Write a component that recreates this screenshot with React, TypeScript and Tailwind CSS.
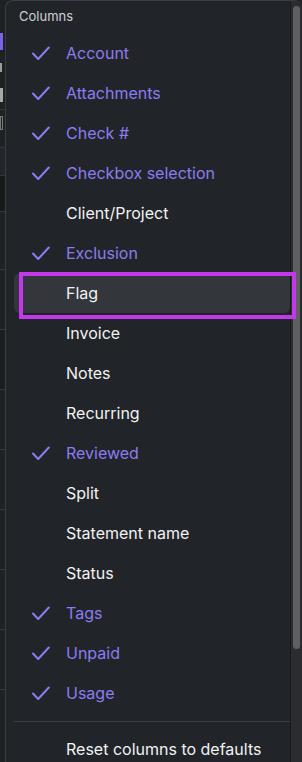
import { useState } from "react";

const columns = [
  { label: "Account", on: true },
  { label: "Attachments", on: true },
  { label: "Check #", on: true },
  { label: "Checkbox selection", on: true },
  { label: "Client/Project", on: false },
  { label: "Exclusion", on: true },
  { label: "Flag", on: false },
  { label: "Invoice", on: false },
  { label: "Notes", on: false },
  { label: "Recurring", on: false },
  { label: "Reviewed", on: true },
  { label: "Split", on: false },
  { label: "Statement name", on: false },
  { label: "Status", on: false },
  { label: "Tags", on: true },
  { label: "Unpaid", on: true },
  { label: "Usage", on: true },
];

const CheckMark = () => (
  <svg width="18" height="15" viewBox="0 0 18 15" fill="none">
    <path
      d="M1 7.5 L6.2 13 L16.8 1.5"
      stroke="#8b7cf2"
      strokeWidth="2"
      strokeLinecap="round"
      strokeLinejoin="round"
    />
  </svg>
);

// the page peeking out left of the menu
const PageEdge = () => (
  <div className="flex w-[5px] flex-col bg-[#1f2225]">
    <div className="h-[33px]" />
    <div className="h-[17px] w-[3px] bg-[#7a62e8]" />
    <div className="h-[13px]" />
    <div className="h-[9px] w-[2px] bg-[#9c9c9c]" />
    <div className="h-[16px]" />
    <div className="h-[14px] w-[3px] bg-[#a8a8a8]" />
    <div className="h-[8px] border-b border-[#34373b]" />
    <div className="h-[6px]" />
    <div className="h-[14px] w-[3px] border border-[#7a7a7a]" />
    <div className="h-[18px] border-b border-[#1f3a5c]" />
    <div className="h-[28px] border-b border-[#1f3a5c] bg-[#232629]" />
    <div className="h-[36px] border-b border-[#34373b] bg-[#17191b]" />
    <div className="h-[58px] border-b border-[#34373b]" />
    <div className="h-[60px] border-b border-[#34373b]" />
    <div className="h-[60px] border-b border-[#34373b] bg-[#1b1d20]" />
    <div className="h-[60px] border-b border-[#34373b]" />
    <div className="h-[60px] border-b border-[#34373b]" />
    <div className="h-[60px] border-b border-[#34373b]" />
    <div className="h-[60px] border-b border-[#34373b]" />
    <div className="h-[60px] border-b border-[#34373b]" />
    <div className="flex-1" />
  </div>
);

export default function App() {
  const [hovered, setHovered] = useState("Flag");

  return (
    <div className="relative flex h-[762px] w-[302px] overflow-hidden bg-[#1f2225] font-['Inter',sans-serif]">
      <PageEdge />

      <div className="flex h-[770px] flex-1 overflow-hidden rounded-lg border-l border-t border-[#3a3d42] bg-[#212428]">
        <div className="flex w-[284px] flex-col">
          <div className="flex h-[32px] items-center pl-[13px] text-[13px] text-[#cfd0d2]">
            Columns
          </div>

          {columns.map((c) => (
            <div
              key={c.label}
              onMouseEnter={() => setHovered(c.label)}
              className={`ml-[8px] flex h-[40px] items-center rounded-md ${
                hovered === c.label ? "bg-[#33363b]" : ""
              }`}
            >
              <div className="flex w-[52px] justify-center pl-[2px]">
                {c.on && <CheckMark />}
              </div>
              <span
                className={`text-[16px] ${
                  c.on ? "text-[#8b7cf2]" : "text-[#f2f2f3]"
                }`}
              >
                {c.label}
              </span>
            </div>
          ))}

          <div className="ml-[8px] mt-[8px] border-t border-[#3a3d42]" />

          <div className="ml-[8px] flex h-[40px] items-center pl-[52px] pt-[14px] text-[16px] text-[#f2f2f3]">
            Reset columns to defaults
          </div>
        </div>

        <div className="flex w-[12px] border-l border-[#18191b] bg-[#2b2c2e] px-[2px] pt-[5px]">
          <div className="h-[643px] w-[7px] rounded-full bg-[#5e5f62]" />
        </div>
      </div>

      {/* annotation outline around the hovered row */}
      <div className="absolute left-[19px] top-[272px] h-[47px] w-[277px] border-4 border-[#c238ea]" />
    </div>
  );
}
